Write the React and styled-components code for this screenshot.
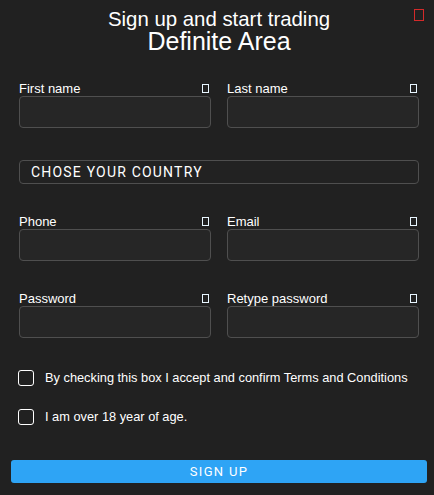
import React from "react";
import styled, { createGlobalStyle } from "styled-components";

const Global = createGlobalStyle`
  html, body { margin: 0; padding: 0; background: #212121; }
  body { font-family: "Liberation Sans", Arial, sans-serif; color: #fff; }
  * { box-sizing: border-box; }
`;

const Page = styled.div`
  position: relative;
  width: 434px;
  min-height: 495px;
  padding: 9px 7px 0 11px;
  background: #212121;
`;

const Header = styled.header`
  display: flex;
  flex-direction: column;
  align-items: center;
`;

const Title = styled.div`
  font-size: 20.4px;
  line-height: 20px;
`;

const Subtitle = styled.div`
  font-size: 25px;
  line-height: 25px;
`;

const Tofu = styled.span`
  display: inline-block;
  width: ${(p) => p.$w}px;
  height: ${(p) => p.$h}px;
  border: ${(p) => p.$b}px solid ${(p) => p.$color};
`;

const CloseBtn = styled.button`
  position: absolute;
  top: 9px;
  right: 10px;
  padding: 0;
  background: none;
  border: none;
  display: flex;
  cursor: pointer;
`;

const Form = styled.form`
  display: flex;
  flex-direction: column;
  padding: 0 8px;
  margin-top: ${(p) => p.$top}px;
`;

const Grid = styled.div`
  display: grid;
  grid-template-columns: 192px 192px;
  column-gap: 16px;
  margin-top: ${(p) => p.$top || 0}px;
`;

const Field = styled.div`
  display: flex;
  flex-direction: column;
`;

const LabelRow = styled.div`
  display: flex;
  justify-content: space-between;
  align-items: center;
  padding-right: 2px;
  height: 15px;
`;

const Label = styled.label`
  font-size: 13px;
  line-height: 15px;
  color: #fff;
`;

const Input = styled.input`
  height: 32px;
  width: 100%;
  background: #262626;
  border: 1px solid #4f4f4f;
  border-radius: 4px;
  color: #fff;
  outline: none;
  padding: 0 10px;
`;

const Select = styled.div`
  margin-top: ${(p) => p.$top}px;
  height: 24px;
  width: 400px;
  border: 1px solid #4f4f4f;
  border-radius: 4px;
  background: #222;
  display: flex;
  align-items: center;
  padding-left: 11px;
  font-family: Roboto, "Liberation Sans", sans-serif;
  font-size: 14px;
  letter-spacing: 1.2px;
  color: #fff;
`;

const CheckRow = styled.label`
  display: flex;
  align-items: center;
  gap: 11px;
  margin-top: ${(p) => p.$top}px;
  margin-left: -1px;
  font-size: 12.8px;
  line-height: 16px;
  height: 16px;
`;

const Box = styled.span`
  width: 16px;
  height: 16px;
  border: 1.5px solid #fff;
  border-radius: 3px;
  flex: none;
`;

const Submit = styled.button`
  margin: 35px 0 0 -8px;
  width: 416px;
  height: 23px;
  border: none;
  border-radius: 3px;
  background: #2ea4f5;
  color: #fff;
  font-family: Roboto, "Liberation Sans", sans-serif;
  font-size: 13px;
  letter-spacing: 1.3px;
  padding: 0;
  cursor: pointer;
`;

const fields = [
  [["First name", "text"], ["Last name", "text"]],
  [["Phone", "tel"], ["Email", "email"]],
  [["Password", "password"], ["Retype password", "password"]],
];

function FieldBox({ label, type }) {
  return (
    <Field>
      <LabelRow>
        <Label>{label}</Label>
        <Tofu $w={7} $h={9} $b={1} $color="#e8f6ff" />
      </LabelRow>
      <Input type={type} />
    </Field>
  );
}

export default function App() {
  return (
    <>
      <Global />
      <Page>
        <Header>
          <Title>Sign up and start trading</Title>
          <Subtitle>Definite Area</Subtitle>
        </Header>
        <CloseBtn type="button" aria-label="close">
          <Tofu $w={10} $h={12} $b={1.5} $color="#d42a2a" />
        </CloseBtn>
        <Form $top={27}>
          <Grid>
            {fields[0].map(([l, t]) => (
              <FieldBox key={l} label={l} type={t} />
            ))}
          </Grid>
          <Select $top={32}>CHOSE YOUR COUNTRY</Select>
          <Grid $top={30}>
            {fields[1].map(([l, t]) => (
              <FieldBox key={l} label={l} type={t} />
            ))}
          </Grid>
          <Grid $top={30}>
            {fields[2].map(([l, t]) => (
              <FieldBox key={l} label={l} type={t} />
            ))}
          </Grid>
          <CheckRow $top={32}>
            <Box />
            By checking this box I accept and confirm Terms and Conditions
          </CheckRow>
          <CheckRow $top={23}>
            <Box />
            I am over 18 year of age.
          </CheckRow>
          <Submit type="button">SIGN UP</Submit>
        </Form>
      </Page>
    </>
  );
}
